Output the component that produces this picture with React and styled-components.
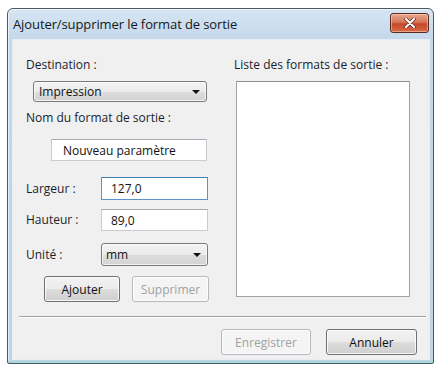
import React from "react";
import styled, { createGlobalStyle } from "styled-components";

const Global = createGlobalStyle`
  html, body { margin: 0; padding: 0; background: #ffffff; }
  body { padding: 8px 3px 0 7px; font-family: "Open Sans", "Noto Sans", sans-serif; }
  * { box-sizing: border-box; }
`;

const Window = styled.div`
  width: 427px;
  height: 356px;
  border: 1px solid #4b5966;
  border-radius: 6px 6px 2px 2px;
  background: linear-gradient(180deg, #d6e5f3 0%, #c4d8eb 30px, #bcd3e8 100%);
  display: flex;
  flex-direction: column;
  padding: 0 3px 3px 4px;
  box-shadow: inset 0 -2px 0 #a9d6d8, inset 1px 1px 0 rgba(255, 255, 255, 0.6);
`;

const TitleBar = styled.div`
  height: 30px;
  display: flex;
  align-items: center;
  justify-content: space-between;
  padding: 0 0 2px 1px;
`;

const Title = styled.div`
  font-size: 13px;
  color: #141820;
  letter-spacing: -0.1px;
  margin-top: 1px;
`;

const CloseBtn = styled.div`
  width: 39px;
  height: 20px;
  margin-right: 1px;
  border: 1px solid #5a2a22;
  border-radius: 3px;
  background: linear-gradient(180deg, #e8a590 0%, #d67859 45%, #c4472a 55%, #d86a45 100%);
  display: flex;
  align-items: center;
  justify-content: center;
  box-shadow: inset 0 0 0 1px rgba(255, 220, 200, 0.5);
`;

const Client = styled.div`
  flex: 1;
  background: #f0f0f0;
  border: 1px solid #e6edf4;
  display: flex;
  flex-direction: column;
  padding: 0 0 0 13px;
`;

const Top = styled.div`
  display: flex;
`;

const LeftCol = styled.div`
  width: 197px;
  display: flex;
  flex-direction: column;
`;

const RightCol = styled.div`
  display: flex;
  flex-direction: column;
  padding-left: 11px;
`;

const Label = styled.div`
  font-size: 12px;
  line-height: 16px;
  height: 16px;
  color: #1a1e2c;
  white-space: nowrap;
  margin-top: ${(p) => p.$mt || 0}px;
`;

const Combo = styled.div`
  height: ${(p) => p.$h}px;
  width: ${(p) => p.$w}px;
  margin-left: ${(p) => p.$ml || 0}px;
  margin-top: ${(p) => p.$mt || 0}px;
  border: 1px solid #7a7a7a;
  border-radius: 3px;
  background: linear-gradient(180deg, #f3f3f3 0%, #ebebeb 50%, #dddddd 51%, #d3d3d3 100%);
  box-shadow: inset 0 0 0 1px rgba(255, 255, 255, 0.7);
  display: flex;
  align-items: center;
  justify-content: space-between;
  padding: 0 6px 0 ${(p) => p.$pl || 5}px;
  font-size: 12px;
  color: #111;
`;

const Arrow = styled.span`
  width: 0;
  height: 0;
  border-left: 4px solid transparent;
  border-right: 4px solid transparent;
  border-top: 4px solid #111;
  margin-top: 1px;
`;

const Input = styled.div`
  height: ${(p) => p.$h}px;
  width: ${(p) => p.$w}px;
  margin-left: ${(p) => p.$ml || 0}px;
  margin-top: ${(p) => p.$mt || 0}px;
  background: #fff;
  border: 1px solid ${(p) => (p.$focus ? "#5a94c8" : "#c8ccd2")};
  border-top-color: ${(p) => (p.$focus ? "#3c7fb1" : "#a6abb3")};
  display: flex;
  align-items: center;
  padding-left: ${(p) => p.$pl || 9}px;
  font-size: 12px;
  color: #111;
`;

const Row = styled.div`
  display: flex;
  align-items: center;
  margin-top: ${(p) => p.$mt}px;
`;

const RowLabel = styled(Label)`
  width: 75px;
`;

const ButtonRow = styled.div`
  display: flex;
  gap: 12px;
  margin-top: ${(p) => p.$mt}px;
  margin-left: ${(p) => p.$ml || 0}px;
`;

const Button = styled.div`
  width: ${(p) => p.$w}px;
  height: 26px;
  border-radius: 3px;
  display: flex;
  align-items: center;
  justify-content: center;
  font-size: 12px;
  border: 1px solid ${(p) => (p.$disabled ? "#b5b9bc" : "#707070")};
  color: ${(p) => (p.$disabled ? "#9ea2a6" : "#111")};
  background: ${(p) =>
    p.$disabled
      ? "#f4f4f4"
      : "linear-gradient(180deg, #f2f2f2 0%, #ebebeb 50%, #dddddd 51%, #cfcfcf 100%)"};
  box-shadow: inset 0 0 0 1px rgba(255, 255, 255, 0.8);
`;

const ListBox = styled.div`
  width: 174px;
  height: 216px;
  margin-left: 2px;
  margin-top: 8px;
  background: #fff;
  border: 1px solid #a0a4aa;
  border-top-color: #8d9198;
`;

const Separator = styled.div`
  height: 2px;
  margin: 14px 3px 0 -7px;
  border-top: 1px solid #a0a0a0;
  border-bottom: 1px solid #ffffff;
`;

const Footer = styled.div`
  display: flex;
  justify-content: flex-end;
  gap: 15px;
  margin-top: 11px;
  padding-right: 12px;
`;

export default function App() {
  return (
    <>
      <Global />
      <Window>
        <TitleBar>
          <Title>Ajouter/supprimer le format de sortie</Title>
          <CloseBtn>
            <svg width="12" height="10" viewBox="0 0 12 10">
              <path d="M2 1 L10 9 M10 1 L2 9" stroke="#5a2a22" strokeWidth="3.4" strokeLinecap="round" />
              <path d="M2 1 L10 9 M10 1 L2 9" stroke="#ffffff" strokeWidth="2" strokeLinecap="round" />
            </svg>
          </CloseBtn>
        </TitleBar>
        <Client>
          <Top>
            <LeftCol>
              <Label $mt={17}>Destination :</Label>
              <Combo $w={174} $h={21} $ml={7} $mt={8}>
                <span>Impression</span>
                <Arrow />
              </Combo>
              <Label $mt={8}>Nom du format de sortie :</Label>
              <Input $w={156} $h={22} $ml={25} $mt={13} $pl={11}>
                Nouveau paramètre
              </Input>
              <Row $mt={16}>
                <RowLabel>Largeur :</RowLabel>
                <Input $w={107} $h={23} $focus>127,0</Input>
              </Row>
              <Row $mt={9}>
                <RowLabel>Hauteur :</RowLabel>
                <Input $w={107} $h={22}>89,0</Input>
              </Row>
              <Row $mt={12}>
                <RowLabel>Unité :</RowLabel>
                <Combo $w={107} $h={23} $pl={4}>
                  <span>mm</span>
                  <Arrow />
                </Combo>
              </Row>
              <ButtonRow $mt={10} $ml={18}>
                <Button $w={76}>Ajouter</Button>
                <Button $w={77} $disabled>Supprimer</Button>
              </ButtonRow>
            </LeftCol>
            <RightCol>
              <Label $mt={17}>Liste des formats de sortie :</Label>
              <ListBox />
            </RightCol>
          </Top>
          <Separator />
          <Footer>
            <Button $w={90} $disabled>Enregistrer</Button>
            <Button $w={91}>Annuler</Button>
          </Footer>
        </Client>
      </Window>
    </>
  );
}
